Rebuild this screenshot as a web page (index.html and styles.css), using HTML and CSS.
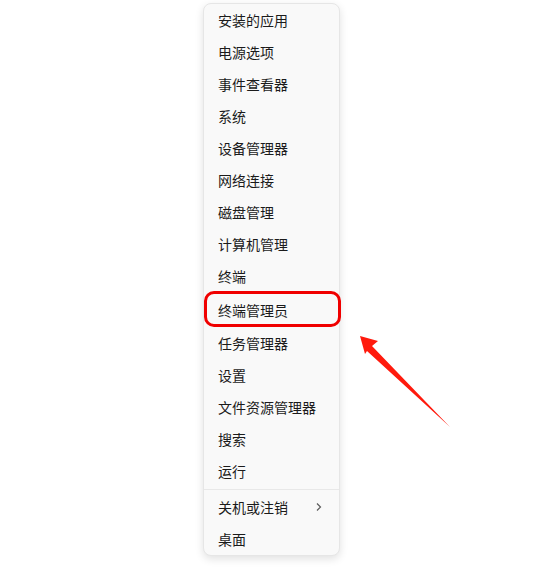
FILE: index.html
```html
<!DOCTYPE html>
<html lang="zh-CN">
<head>
  <meta charset="UTF-8" />
  <title>快速链接菜单</title>
  <link rel="stylesheet" href="styles.css">
</head>
<body>
  <main class="stage">
    <ul class="menu">
      <li>安装的应用</li>
      <li>电源选项</li>
      <li>事件查看器</li>
      <li>系统</li>
      <li>设备管理器</li>
      <li>网络连接</li>
      <li>磁盘管理</li>
      <li>计算机管理</li>
      <li>终端</li>
      <li class="picked">终端管理员</li>
      <li>任务管理器</li>
      <li>设置</li>
      <li>文件资源管理器</li>
      <li>搜索</li>
      <li>运行</li>
      <li class="sep"></li>
      <li class="sub">关机或注销
        <svg class="chev" width="8" height="10" viewBox="0 0 8 10"><path d="M2 1.5 L5.5 5 L2 8.5" fill="none" stroke="#5c5c5c" stroke-width="1.2"/></svg>
      </li>
      <li>桌面</li>
    </ul>

    <div class="mark"></div>

    <svg class="arrow" width="534" height="567" viewBox="0 0 534 567">
      <polygon points="360,336 378,341 372,346 450,427 367,351 365,354" fill="#ff1a0d"/>
    </svg>
  </main>
</body>
</html>
```

FILE: styles.css
```css
* {
  margin: 0;
  padding: 0;
  box-sizing: border-box;
}

body {
  background: #ffffff;
  font-family: "Noto Sans CJK SC", "Noto Sans", sans-serif;
}

.stage {
  position: relative;
  width: 534px;
  height: 567px;
  padding: 3px 0 0 203px;
}

.menu {
  list-style: none;
  width: 137px;
  background: #f9f9f9;
  border: 1px solid #e6e6e6;
  border-radius: 8px;
  box-shadow: 0 3px 8px rgba(0, 0, 0, 0.12);
  padding: 0;
}

.menu li {
  height: 32px;
  display: flex;
  align-items: center;
  padding-left: 14px;
  padding-bottom: 1px;
  font-size: 14px;
  color: #1b1b1b;
}

.menu li.picked {
  height: 35px;
  padding-top: 1px;
}

.menu li.sep {
  height: 1px;
  margin: 2px 0 1px;
  background: #e8e8e8;
  padding: 0;
}

.menu li.sub {
  justify-content: space-between;
  padding-right: 16px;
}

.mark {
  position: absolute;
  left: 204px;
  top: 291px;
  width: 137px;
  height: 36px;
  border: 3px solid #f00000;
  border-radius: 10px;
}

.arrow {
  position: absolute;
  left: 0;
  top: 0;
}
```
